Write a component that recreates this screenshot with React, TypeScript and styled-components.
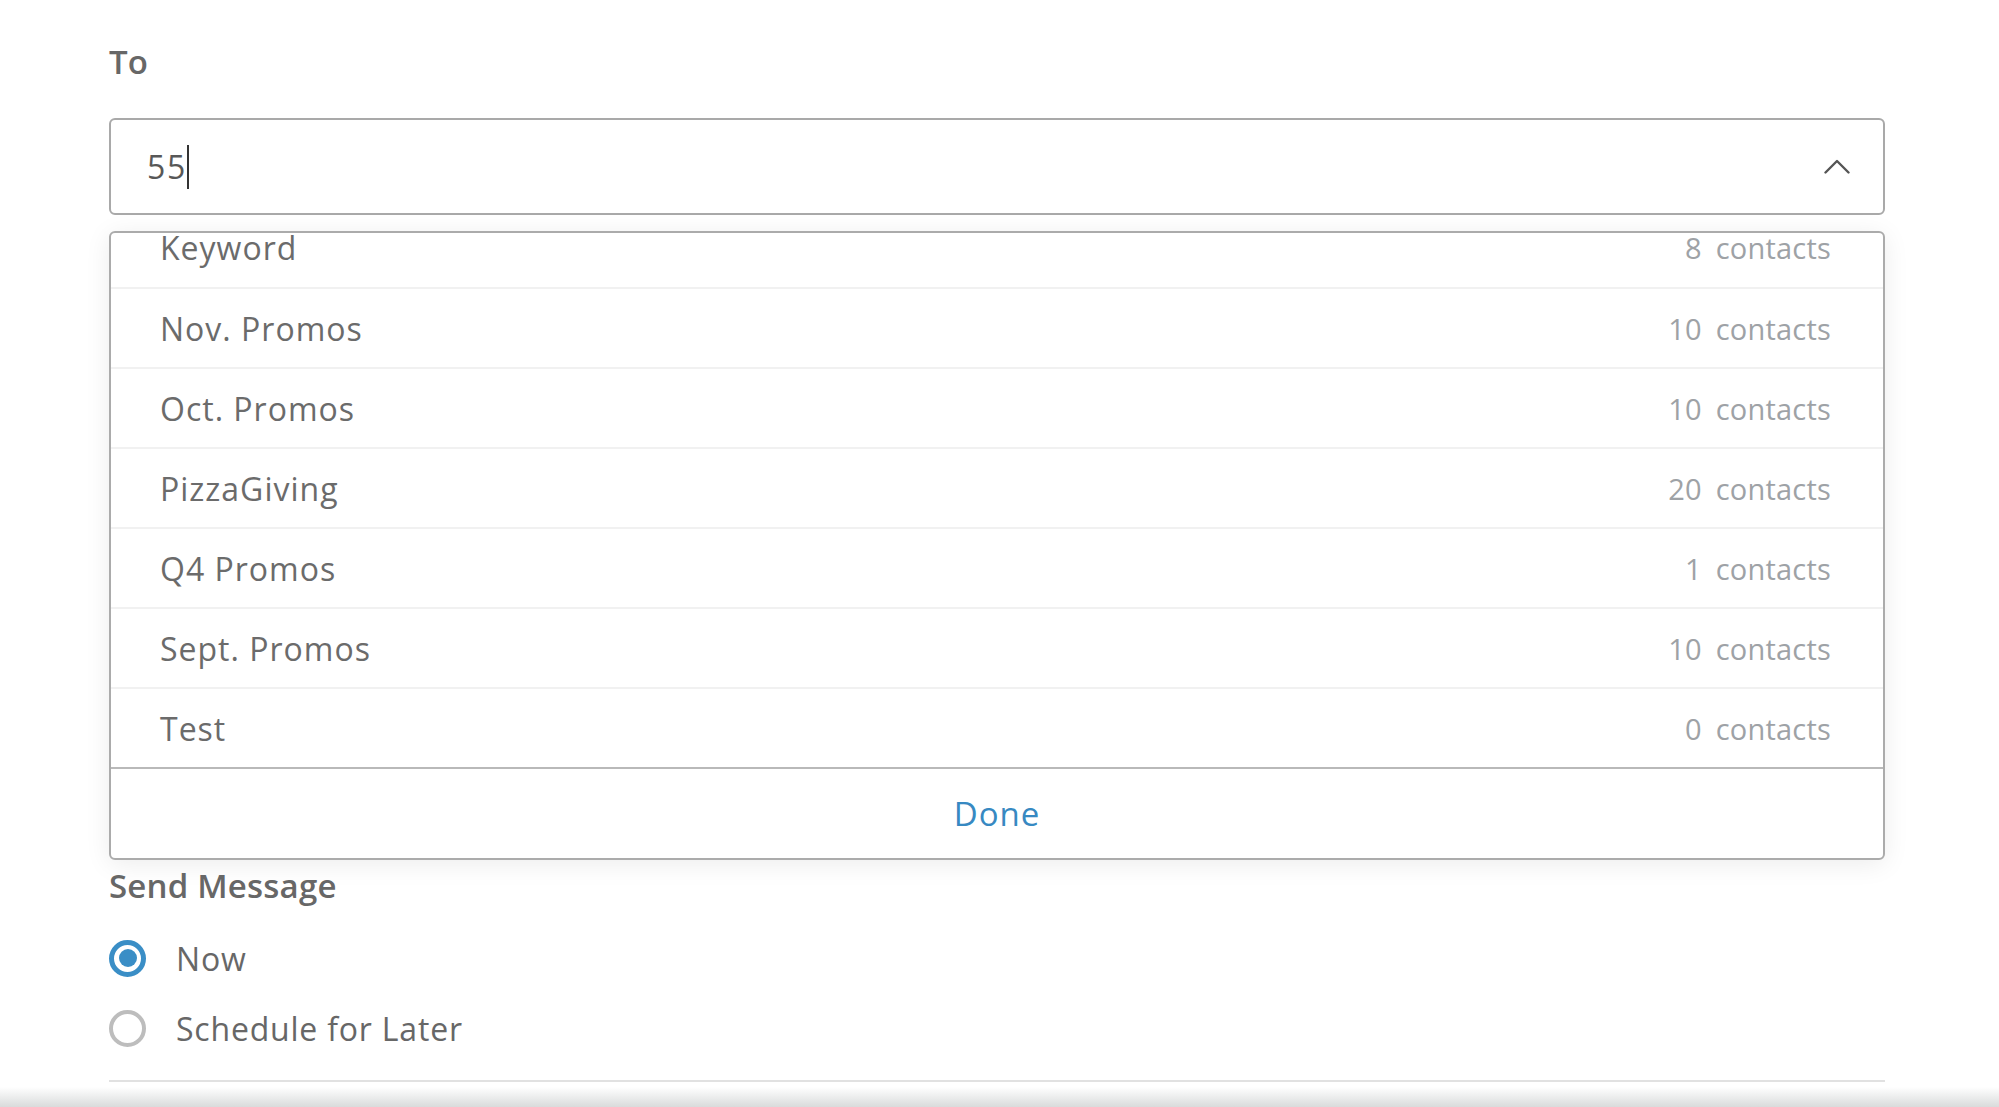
import React, { useLayoutEffect, useRef } from "react";
import styled, { createGlobalStyle } from "styled-components";

const GlobalStyle = createGlobalStyle`
  html, body {
    margin: 0;
    padding: 0;
    background: #ffffff;
    overflow: hidden;
  }
  body {
    font-family: "Open Sans", "Noto Sans", sans-serif;
  }
  * { box-sizing: border-box; }
`;

const Page = styled.div`
  height: 1107px;
  display: flex;
  flex-direction: column;
  background: #ffffff;
`;

const Form = styled.div`
  margin-left: 109px;
  width: 1776px;
  padding-top: 40px;
  display: flex;
  flex-direction: column;
`;

const FieldLabel = styled.div<{ $gap?: number }>`
  font-size: 33px;
  font-weight: 600;
  letter-spacing: 0.2px;
  line-height: ${(p) => (p.$gap !== undefined ? "40px" : "44px")};
  color: #676767;
  margin-top: ${(p) => p.$gap ?? 0}px;
`;

const InputBox = styled.div`
  margin-top: 34px;
  height: 97px;
  border: 2px solid #a9a9a9;
  border-radius: 6px;
  display: flex;
  align-items: center;
  justify-content: space-between;
  padding: 0 33px 0 36px;
  background: #fff;
`;

const InputValue = styled.div`
  display: flex;
  align-items: center;
  font-size: 32px;
  letter-spacing: 1.8px;
  color: #585858;
`;

const Caret = styled.span`
  display: inline-block;
  width: 2px;
  height: 44px;
  margin-left: 0;
  background: #333333;
`;

const Dropdown = styled.div`
  margin-top: 16px;
  border: 2px solid #ababab;
  border-radius: 6px;
  background: #fff;
  box-shadow: 0 4px 26px rgba(0, 0, 0, 0.08);
  display: flex;
  flex-direction: column;
  overflow: hidden;
`;

const List = styled.div`
  height: 534px;
  overflow-y: auto;
  scrollbar-width: none;
  &::-webkit-scrollbar {
    display: none;
  }
`;

const Row = styled.div`
  height: 80px;
  display: flex;
  align-items: center;
  justify-content: space-between;
  padding: 0 52px 0 49px;
  & + & {
    border-top: 2px solid #f1f1f1;
  }
`;

const RowName = styled.span`
  font-size: 32px;
  letter-spacing: 1px;
  color: #6b6b6b;
`;

const RowCount = styled.span`
  display: flex;
  gap: 14px;
  font-size: 29px;
  letter-spacing: 0.2px;
  color: #9ea2a6;
`;

const DoneBar = styled.div`
  height: 91px;
  border-top: 2px solid #b9b9b9;
  display: flex;
  align-items: center;
  justify-content: center;
`;

const DoneButton = styled.button`
  border: none;
  background: none;
  padding: 0;
  font-family: inherit;
  font-size: 33px;
  font-weight: 500;
  letter-spacing: 1px;
  color: #3789c2;
  cursor: pointer;
`;

const RadioGroup = styled.div`
  margin-top: 24px;
  display: flex;
  flex-direction: column;
  gap: 14px;
`;

const RadioRow = styled.label`
  height: 56px;
  display: flex;
  align-items: center;
  gap: 30px;
  font-size: 32px;
  letter-spacing: 0.8px;
  color: #676767;
`;

const RadioCircle = styled.span<{ $checked?: boolean }>`
  width: 37px;
  height: 37px;
  border-radius: 50%;
  border: ${(p) => (p.$checked ? "5px solid #3a8ec6" : "4px solid #bdbdbd")};
  display: flex;
  align-items: center;
  justify-content: center;
  flex-shrink: 0;
  &::after {
    content: "";
    display: ${(p) => (p.$checked ? "block" : "none")};
    width: 18px;
    height: 18px;
    border-radius: 50%;
    background: #3a8ec6;
  }
`;

const Divider = styled.div`
  margin-top: 24px;
  height: 2px;
  background: #e1e1e1;
`;

const Filler = styled.div`
  flex: 1;
`;

const BottomShade = styled.div`
  height: 20px;
  background: linear-gradient(#ffffff, #d9dbdb);
`;

const groups = [
  { name: "Keyword", count: 8 },
  { name: "Nov. Promos", count: 10 },
  { name: "Oct. Promos", count: 10 },
  { name: "PizzaGiving", count: 20 },
  { name: "Q4 Promos", count: 1 },
  { name: "Sept. Promos", count: 10 },
  { name: "Test", count: 0 },
];

function ChevronUp() {
  return (
    <svg width="26" height="15" viewBox="0 0 26 15" fill="none">
      <polyline
        points="1.5,13.5 13,2 24.5,13.5"
        stroke="#555555"
        strokeWidth="2.4"
        strokeLinecap="round"
        strokeLinejoin="round"
      />
    </svg>
  );
}

export default function App() {
  const listRef = useRef<HTMLDivElement>(null);

  useLayoutEffect(() => {
    if (listRef.current) {
      listRef.current.scrollTop = listRef.current.scrollHeight;
    }
  }, []);

  return (
    <Page>
      <GlobalStyle />
      <Form>
        <FieldLabel>To</FieldLabel>
        <InputBox>
          <InputValue>
            55
            <Caret />
          </InputValue>
          <ChevronUp />
        </InputBox>
        <Dropdown>
          <List ref={listRef}>
            {groups.map((g) => (
              <Row key={g.name}>
                <RowName>{g.name}</RowName>
                <RowCount>
                  <span>{g.count}</span>
                  <span>contacts</span>
                </RowCount>
              </Row>
            ))}
          </List>
          <DoneBar>
            <DoneButton>Done</DoneButton>
          </DoneBar>
        </Dropdown>
        <FieldLabel $gap={6}>Send Message</FieldLabel>
        <RadioGroup>
          <RadioRow>
            <RadioCircle $checked />
            Now
          </RadioRow>
          <RadioRow>
            <RadioCircle />
            Schedule for Later
          </RadioRow>
        </RadioGroup>
        <Divider />
      </Form>
      <Filler />
      <BottomShade />
    </Page>
  );
}
